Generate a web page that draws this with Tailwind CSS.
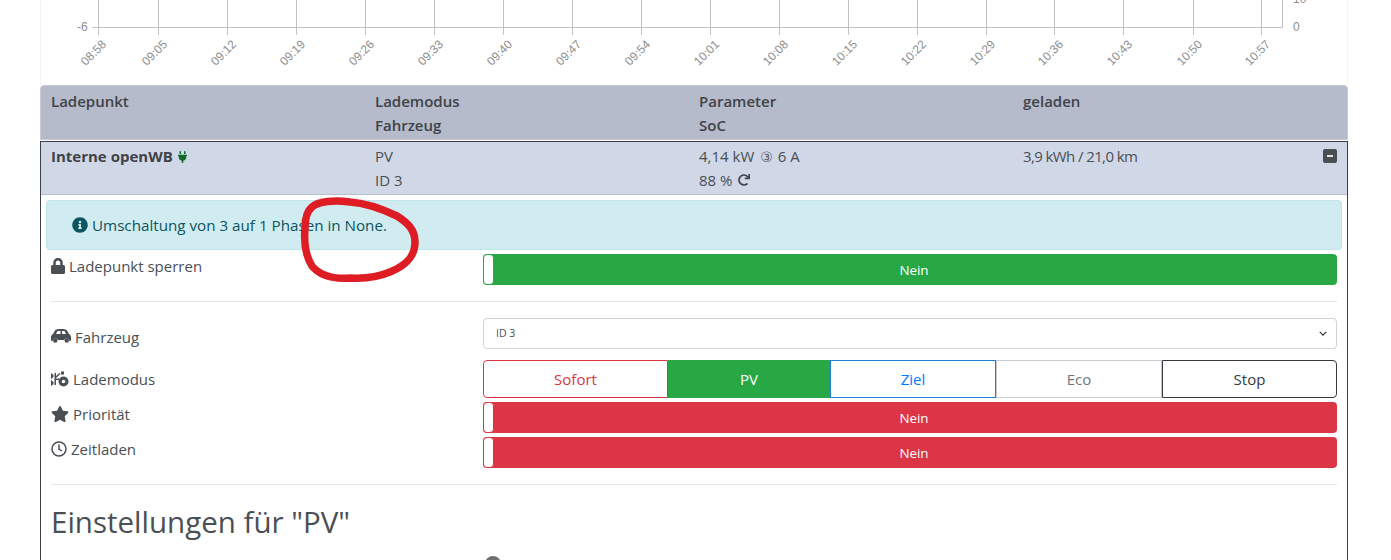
<!DOCTYPE html>
<html lang="de">
<head>
    <meta charset="UTF-8">
    <title>openWB</title>
    <script src="https://cdn.jsdelivr.net/npm/@tailwindcss/browser@4"></script>
</head>
<body class="bg-white overflow-hidden h-[560px] text-[15px] text-[#4a4f54] font-['Open_Sans','Noto_Sans',sans-serif]">
<div class="relative h-[560px] overflow-hidden">
    <!-- chart -->
    <div class="ml-[40px] w-[1308px] h-[85px] border-x border-[#f6f6f6]">
        <svg width="1306" height="85" viewBox="41 0 1306 85" class="block" fill="#8e8e8e" font-family="Liberation Sans, sans-serif" font-size="12">
            <g stroke="#c2c2c2" stroke-width="1" fill="none">
                <path d="M98.5 0V35M158.5 0V35M227.5 0V35M296.5 0V35M365.5 0V35M434.5 0V35M503.5 0V35M572.5 0V35M641.5 0V35M710.5 0V35M779.5 0V35M848.5 0V35M917.5 0V35M986.5 0V35M1054.5 0V35M1123.5 0V35M1193.5 0V35M1261.5 0V35"/>
                <path d="M92 27.5H1282.5V0"/>
            </g>
            <text x="77" y="31">-6</text>
            <text x="1293" y="31">0</text>
            <text x="1293" y="3">10</text>
            <g text-anchor="end">
                <text transform="translate(107 45) rotate(-45)">08:58</text>
                <text transform="translate(168 45) rotate(-45)">09:05</text>
                <text transform="translate(237 45) rotate(-45)">09:12</text>
                <text transform="translate(306 45) rotate(-45)">09:19</text>
                <text transform="translate(375 45) rotate(-45)">09:26</text>
                <text transform="translate(444 45) rotate(-45)">09:33</text>
                <text transform="translate(513 45) rotate(-45)">09:40</text>
                <text transform="translate(582 45) rotate(-45)">09:47</text>
                <text transform="translate(651 45) rotate(-45)">09:54</text>
                <text transform="translate(720 45) rotate(-45)">10:01</text>
                <text transform="translate(789 45) rotate(-45)">10:08</text>
                <text transform="translate(858 45) rotate(-45)">10:15</text>
                <text transform="translate(927 45) rotate(-45)">10:22</text>
                <text transform="translate(996 45) rotate(-45)">10:29</text>
                <text transform="translate(1064 45) rotate(-45)">10:36</text>
                <text transform="translate(1133 45) rotate(-45)">10:43</text>
                <text transform="translate(1203 45) rotate(-45)">10:50</text>
                <text transform="translate(1271 45) rotate(-45)">10:57</text>
            </g>
        </svg>
    </div>

    <!-- table head -->
    <div class="ml-[40px] w-[1308px] h-[55px] bg-[#b5bbcb] border border-[#c6cad6] rounded-t-[4px] pl-[10px] pt-[3px] grid grid-cols-[324px_324px_324px_1fr] font-semibold leading-[24px] text-[#3f4347]">
        <div>Ladepunkt</div>
        <div>Lademodus<br>Fahrzeug</div>
        <div>Parameter<br>SoC</div>
        <div>geladen</div>
    </div>

    <!-- charge point card -->
    <div class="ml-[40px] mt-[1px] w-[1308px] h-[420px] border-x border-t border-[#3b4047]">
        <div class="relative h-[53px] bg-[#d0d7e7] border-b border-[#b9bfcc] pl-[10px] pt-[3px] grid grid-cols-[324px_324px_324px_1fr] leading-[23.5px]">
            <div class="font-bold text-[#3f4347] flex items-start gap-[5px]">
                Interne openWB
                <svg viewBox="0 0 384 512" class="w-[9px] h-[12px] mt-[6px]" fill="#0f6b2c"><path d="M320,32a32,32,0,0,0-64,0v96h64Zm48,128H16A16,16,0,0,0,0,176v32a16,16,0,0,0,16,16H32v32A160.07,160.07,0,0,0,160,412.8V512h64V412.8A160.07,160.07,0,0,0,352,256V224h16a16,16,0,0,0,16-16V176A16,16,0,0,0,368,160ZM128,32a32,32,0,0,0-64,0v96h64Z"/></svg>
            </div>
            <div>PV<br>ID 3</div>
            <div>
                <div class="flex items-center h-[23.5px]">4,14 kW<span class="ml-[6px] mr-[5px] font-['DejaVu_Sans',sans-serif] text-[14px] leading-none text-[#5c6166]">③</span>6 A</div>
                <div class="flex items-center h-[23.5px]">88 %
                    <svg viewBox="0 0 512 512" class="ml-[6px] w-[12px] h-[12px]" fill="#42474c"><path d="M500.33 0h-47.41a12 12 0 0 0-12 12.57l4 82.76A247.42 247.42 0 0 0 256 8C119.34 8 7.9 119.53 8 256.19 8.1 393.07 119.1 504 256 504a247.1 247.1 0 0 0 166.18-63.91 12 12 0 0 0 .48-17.43l-34-34a12 12 0 0 0-16.38-.55A176 176 0 1 1 402.1 157.8l-101.53-4.87a12 12 0 0 0-12.57 12v47.41a12 12 0 0 0 12 12h200.33a12 12 0 0 0 12-12V12a12 12 0 0 0-12-12z"/></svg>
                </div>
            </div>
            <div class="tracking-[-0.6px]">3,9 kWh / 21,0 km</div>
            <div class="absolute right-[10px] top-[7px] w-[14px] h-[14px] rounded-[2px] bg-[#4a4f54] flex items-center justify-center">
                <div class="w-[6px] h-[2px] bg-[#e2e4e8]"></div>
            </div>
        </div>

        <div class="px-[5px] pt-[5px]">
            <div class="h-[50px] bg-[#d1ecf1] border border-[#bee5eb] rounded-[4px] pl-[25px] flex items-center gap-[4px] text-[15.2px] text-[#0c5460]">
                <svg viewBox="0 0 512 512" class="w-[16px] h-[16px]" fill="#0c5460"><path d="M256 8C119.043 8 8 119.083 8 256c0 136.997 111.043 248 248 248s248-111.003 248-248C504 119.083 392.957 8 256 8zm0 110c23.196 0 42 18.804 42 42s-18.804 42-42 42-42-18.804-42-42 18.804-42 42-42zm56 254c0 6.627-5.373 12-12 12h-88c-6.627 0-12-5.373-12-12v-24c0-6.627 5.373-12 12-12h12v-64h-12c-6.627 0-12-5.373-12-12v-24c0-6.627 5.373-12 12-12h64c6.627 0 12 5.373 12 12v100h12c6.627 0 12 5.373 12 12v24z"/></svg>
                Umschaltung von 3 auf 1 Phasen in None.
            </div>
        </div>

        <div class="px-[10px]">
            <!-- sperren -->
            <div class="mt-[4px] h-[31px] grid grid-cols-[432px_1fr]">
                <div class="flex items-start gap-[4px] leading-[24px]">
                    <svg viewBox="0 0 448 512" class="w-[14px] h-[16px] mt-[4px]" fill="#4a4f54"><path d="M400 224h-24v-72C376 68.2 307.8 0 224 0S72 68.2 72 152v72H48c-26.5 0-48 21.5-48 48v192c0 26.5 21.5 48 48 48h352c26.5 0 48-21.5 48-48V272c0-26.5-21.5-48-48-48zm-104 0H152v-72c0-39.7 32.3-72 72-72s72 32.3 72 72v72z"/></svg>
                    Ladepunkt sperren
                </div>
                <div class="relative h-[31px] rounded-[4px] bg-[#28a745] text-white text-[13.4px] pl-[8px] pt-[1px] flex items-center justify-center">
                    Nein
                    <div class="absolute left-0 top-0 w-[11px] h-[31px] bg-white border border-[#28a745] rounded-[4px]"></div>
                </div>
            </div>
            <div class="mt-[16px] h-px bg-[#e6e6e6]"></div>

            <!-- Fahrzeug -->
            <div class="mt-[16px] h-[31px] grid grid-cols-[432px_1fr]">
                <div class="flex items-start pt-[7px] gap-[4px] leading-[24px]">
                    <svg viewBox="0 0 40 28" class="w-[20px] h-[14px] mt-[4px]" fill="#4a4f54"><path fill-rule="evenodd" d="M8 3C10 1 13 0 16 0h8c3 0 6 1 8 3l4 7c2 1 4 3 4 6v6c0 1-1 2-2 2h-1a6 6 0 0 0-11-2H14a6 6 0 0 0-11 2H2c-1 0-2-1-2-2v-6c0-3 2-5 4-6zM13 4l-3 6h9V4zM22 4v6h8l-3-6z"/><circle cx="8.500" cy="23" r="4.500"/><circle cx="31.500" cy="23" r="4.500"/></svg>
                    Fahrzeug
                </div>
                <div class="h-[31px] border border-[#ced4da] rounded-[4px] pl-[12px] pr-[9px] flex items-center justify-between text-[10.500px] text-[#495057]">
                    ID 3
                    <svg viewBox="0 0 10 6" class="w-[8px] h-[5px]" fill="none" stroke="#343a40" stroke-width="1.600"><path d="M1 1l4 4 4-4"/></svg>
                </div>
            </div>

            <!-- Lademodus -->
            <div class="mt-[11px] h-[38px] grid grid-cols-[432px_1fr]">
                <div class="flex items-center gap-[4px]">
                    <svg viewBox="0 0 18 16" class="w-[18px] h-[16px]" fill="#4a4f54"><circle cx="12.500" cy="10.500" r="5"/><circle cx="12.500" cy="10.500" r="1.800" fill="#fff"/><path d="M0 2l2.500 2v2L0 8zM0 9l2.500 2v2L0 15zM3.500 2h1.500v12H3.500zM5 7.500h3v1.500H5zM5 5l3.500-3 1 1-4.500 4zM10 .5h3v3h-3z"/></svg>
                    Lademodus
                </div>
                <div class="flex h-[38px]">
                    <div class="w-[185px] border border-[#dc3545] rounded-l-[4px] text-[#dc3545] flex items-center justify-center">Sofort</div>
                    <div class="w-[162px] bg-[#28a745] text-white flex items-center justify-center">PV</div>
                    <div class="w-[166px] border border-[#1f7fd8] text-[#007bff] flex items-center justify-center">Ziel</div>
                    <div class="w-[166px] border border-[#c8cbce] text-[#6c757d] flex items-center justify-center">Eco</div>
                    <div class="flex-1 border border-[#343a40] rounded-r-[4px] text-[#343a40] flex items-center justify-center">Stop</div>
                </div>
            </div>

            <!-- Priorität -->
            <div class="mt-[4px] h-[31px] grid grid-cols-[432px_1fr]">
                <div class="flex items-start gap-[4px] leading-[24px]">
                    <svg viewBox="0 0 576 512" class="w-[18px] h-[16px] mt-[4px]" fill="#4a4f54"><path d="M259.3 17.8L194 150.2 47.9 171.5c-26.2 3.8-36.700 36.100-17.700 54.600l105.700 103-25 145.500c-4.500 26.300 23.200 46 46.400 33.700L288 439.600l130.700 68.700c23.200 12.200 50.900-7.400 46.400-33.700l-25-145.500 105.700-103c19-18.500 8.500-50.800-17.700-54.600L382 150.200 316.700 17.800c-11.700-23.600-45.600-23.900-57.400 0z"/></svg>
                    Priorität
                </div>
                <div class="relative h-[31px] rounded-[4px] bg-[#dc3545] text-white text-[13.4px] pl-[8px] pt-[1px] flex items-center justify-center">
                    Nein
                    <div class="absolute left-0 top-0 w-[11px] h-[31px] bg-white border border-[#dc3545] rounded-[4px]"></div>
                </div>
            </div>

            <!-- Zeitladen -->
            <div class="mt-[4px] h-[31px] grid grid-cols-[432px_1fr]">
                <div class="flex items-start gap-[4px] leading-[24px]">
                    <svg viewBox="0 0 16 16" class="w-[16px] h-[16px] mt-[4px]" fill="none" stroke="#4a4f54" stroke-width="1.500"><circle cx="8" cy="8" r="7"/><path d="M8 3.500V8l3 2"/></svg>
                    Zeitladen
                </div>
                <div class="relative h-[31px] rounded-[4px] bg-[#dc3545] text-white text-[13.4px] pl-[8px] pt-[1px] flex items-center justify-center">
                    Nein
                    <div class="absolute left-0 top-0 w-[11px] h-[31px] bg-white border border-[#dc3545] rounded-[4px]"></div>
                </div>
            </div>
            <div class="mt-[16px] h-px bg-[#e6e6e6]"></div>

            <h2 class="mt-[17px] text-[29.5px] leading-[40px] text-[#4a4f54]">Einstellungen für "PV"</h2>
            <div class="mt-[14px] ml-[434px] w-[16px] h-[16px] rounded-full bg-[#6c7075]"></div>
        </div>
    </div>

    <!-- red marker drawn on the screenshot -->
    <svg class="absolute left-0 top-0 pointer-events-none" width="1391" height="560" fill="none">
        <path d="M312 207C318 201 335 200 350 202C365 203 380 208 397 216C408 223 415 230 415 242C415 256 407 265 390 272C378 277 365 279 350 278C335 279 320 276 312 266C305 255 304 240 305 228C305 218 307 211 312 207Z" stroke="#dd1c24" stroke-width="7.500" stroke-linejoin="round"/>
    </svg>
</div>
</body>
</html>
